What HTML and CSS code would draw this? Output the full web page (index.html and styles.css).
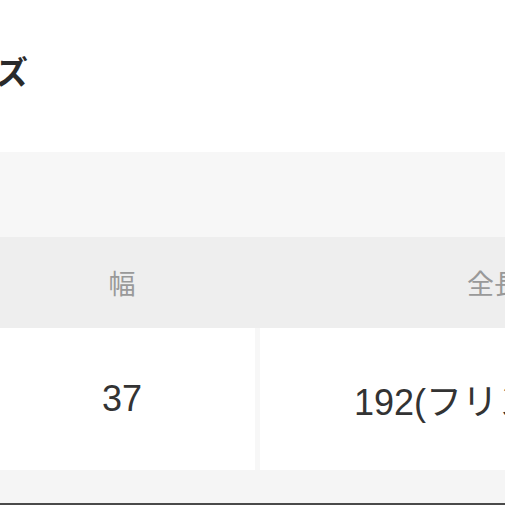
FILE: index.html
```html
<!DOCTYPE html>
<html lang="ja">
<head>
<meta charset="utf-8">
<link rel="stylesheet" href="styles.css">
</head>
<body>
<div class="page">
  <h2 class="title">サイズ</h2>
  <div class="size-table">
    <div class="caption-band"></div>
    <div class="row head">
      <div class="cell">幅</div>
      <div class="cell">全長</div>
    </div>
    <div class="row body">
      <div class="cell">37</div>
      <div class="cell">192(フリンジ含む)</div>
    </div>
    <div class="foot-band"></div>
  </div>
  <div class="bottom-line"></div>
</div>
</body>
</html>
```
FILE: styles.css
```css
html, body {
  margin: 0;
  padding: 0;
  background: #ffffff;
  overflow: hidden;
}
.page {
  width: 505px;
  height: 505px;
  overflow: hidden;
  font-family: "Noto Sans CJK JP", "Liberation Sans", sans-serif;
  display: flex;
  flex-direction: column;
}
.title {
  flex: none;
  margin: 0 0 0 -67px;
  padding-top: 47px;
  height: 152px;
  box-sizing: border-box;
  font-size: 32px;
  font-weight: 700;
  line-height: 46px;
  color: #2a2a2a;
  white-space: nowrap;
}
.size-table {
  flex: none;
  margin-left: -11px;
  width: 760px;
  display: flex;
  flex-direction: column;
}
.caption-band {
  height: 85px;
  background: #f7f7f7;
}
.row {
  display: grid;
  grid-template-columns: 266px 480px;
  column-gap: 5px;
}
.row .cell {
  display: flex;
  align-items: center;
  justify-content: center;
  white-space: nowrap;
}
.head {
  height: 91px;
  background: #eeeeee;
}
.head .cell {
  font-size: 27px;
  color: #999999;
  background: #eeeeee;
}
.head .cell + .cell {
  padding-right: 12px;
}
.body {
  height: 142px;
  background: #f7f7f7;
}
.body .cell {
  background: #ffffff;
  font-family: "Liberation Sans", "Noto Sans CJK JP", sans-serif;
  font-size: 36px;
  color: #333333;
}
.body .cell + .cell {
  padding-left: 8px;
}
.foot-band {
  height: 33px;
  background: #f5f5f5;
}
.bottom-line {
  flex: none;
  height: 2px;
  background: #4a4a4a;
}
```
